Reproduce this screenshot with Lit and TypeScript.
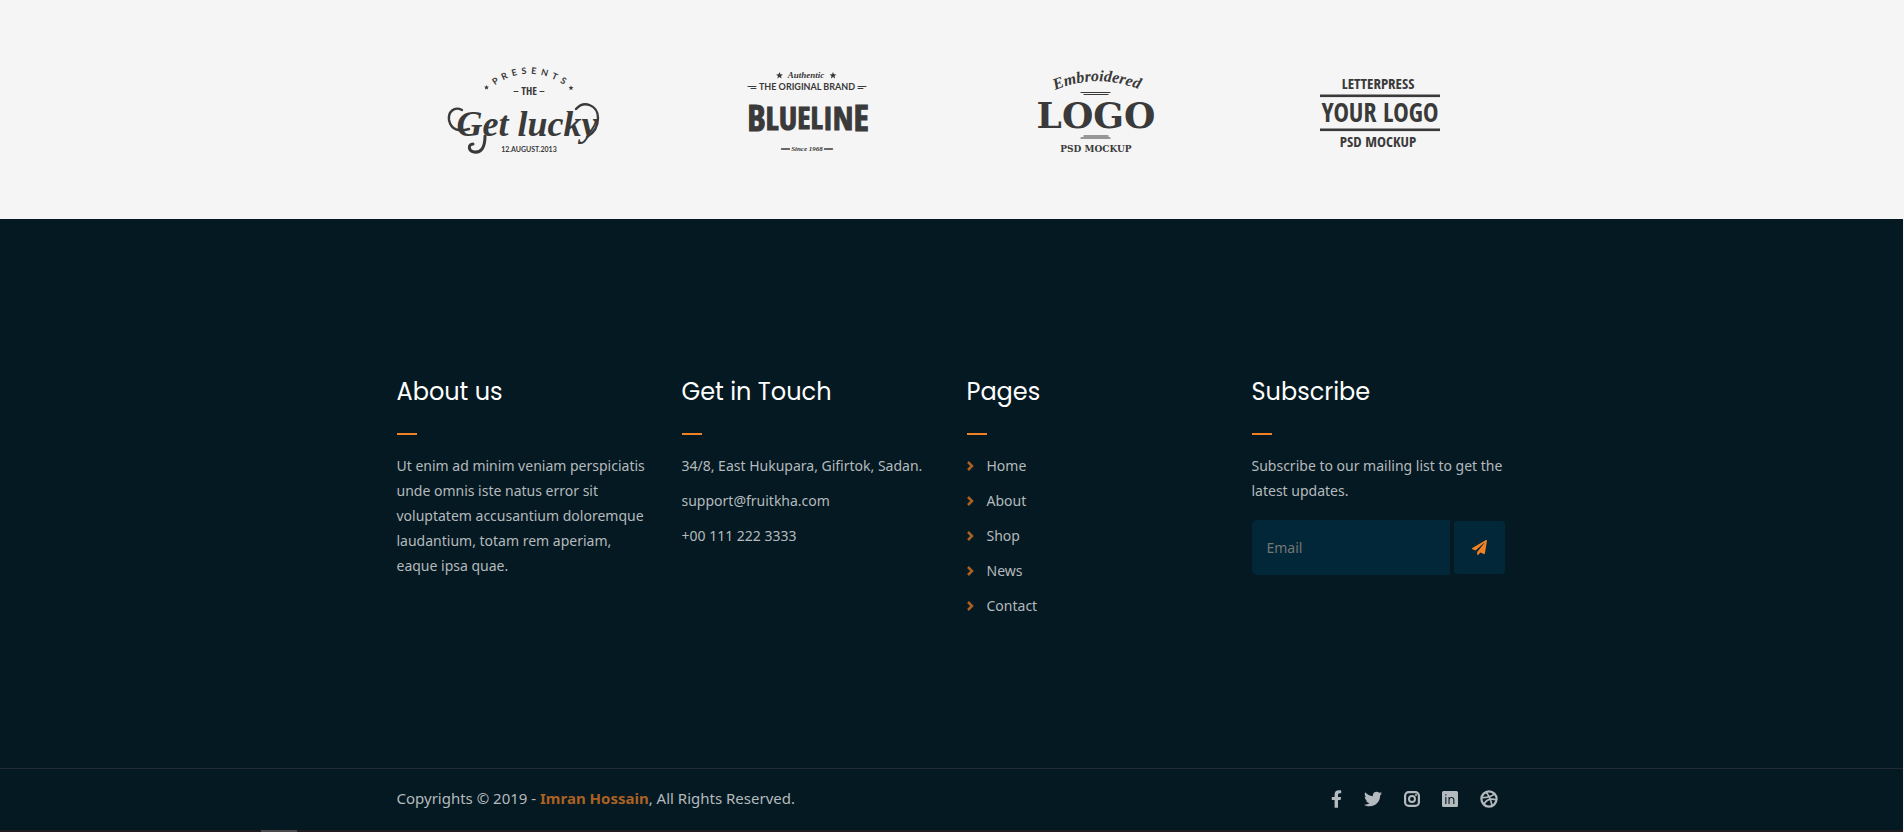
import { LitElement, html, css, svg } from "lit";
import { customElement } from "lit/decorators.js";

const star = (x: number, y: number, r: number) => {
  const pts: string[] = [];
  for (let i = 0; i < 10; i++) {
    const a = (Math.PI / 5) * i - Math.PI / 2;
    const k = i % 2 ? r * 0.45 : r;
    pts.push(`${(x + k * Math.cos(a)).toFixed(2)},${(y + k * Math.sin(a)).toFixed(2)}`);
  }
  return svg`<polygon points=${pts.join(" ")} />`;
};

@customElement("brand-row")
export class BrandRow extends LitElement {
  static styles = css`
    :host {
      display: block;
      background: #f5f5f5;
      padding: 50px 0;
    }
    .row {
      max-width: 1140px;
      margin: 0 auto;
      display: grid;
      grid-template-columns: repeat(4, 1fr);
      justify-items: center;
    }
    svg {
      display: block;
      width: 170px;
      height: 119px;
      fill: #3a3a3a;
    }
    .line {
      fill: none;
      stroke: #3a3a3a;
      stroke-linecap: round;
    }
    .guide {
      fill: none;
    }
    text {
      text-anchor: middle;
    }
    .narrow {
      font-family: "Open Sans Condensed", "Liberation Sans Narrow", "DejaVu Sans Condensed", sans-serif;
    }
    .sans {
      font-family: Lato, sans-serif;
    }
    .script {
      font-family: "Liberation Serif", serif;
      font-style: italic;
      font-weight: 700;
    }
    .slab {
      font-family: "DejaVu Serif", serif;
      font-weight: 700;
    }
    .bold {
      font-weight: 700;
    }
    .s7 { font-size: 7px; }
    .s9 { font-size: 9px; }
    .s11 { font-size: 11px; }
    .s15 { font-size: 15px; }
    .s16 { font-size: 16px; }
    .s26 { font-size: 26px; }
    .s31 { font-size: 31px; }
    .s33 { font-size: 33px; }
    .s36 { font-size: 36px; }
    .block {
      stroke: #3a3a3a;
      stroke-width: 1;
      dominant-baseline: central;
    }
  `;

  render() {
    return html`
      <div class="row">
        <svg viewBox="0 0 170 119" role="img" aria-label="Get lucky">
          <path id="arc1" class="guide" d="M51 39 Q88 9 130 38" />
          <text class="sans bold s9"><textPath href="#arc1" startOffset="50%">P&#160; R&#160; E&#160; S&#160; E&#160; N&#160; T&#160; S</textPath></text>
          ${star(47.5, 37.5, 2.6)} ${star(132, 38, 2.6)}
          <text class="narrow bold s11" x="90" y="45">THE</text>
          <path class="line" stroke-width="1" d="M75 41.5h4M101 41.5h4" />
          <text class="script s36" x="88" y="86">Get lucky</text>
          <path class="line" stroke-width="2.4" d="M23 60C15 56 9 62 10 70C12 80 20 82 30 79" />
          <path class="line" stroke-width="3" d="M46 86C46 98 42 103 35 102C29 101 29 94 34 94" />
          <path class="line" stroke-width="2.4" d="M137 59C145 50 159 55 159 68C159 77 155 83 148 87" />
          <text class="sans bold s7" x="90" y="102">12.AUGUST.2013</text>
        </svg>

        <svg viewBox="0 0 170 119" role="img" aria-label="Blueline">
          ${star(55.5, 25.5, 3.6)} ${star(109, 25.5, 3.6)}
          <text class="script s9" x="82" y="28">Authentic</text>
          <text class="sans bold s9" x="83" y="40">THE ORIGINAL BRAND</text>
          <path class="line" stroke-width="1" d="M24 36.5h8M27 38.5h5M134 36.5h8M134 38.5h5" />
          <text class="narrow bold block" x="84" y="67"><tspan class="s36">B</tspan><tspan class="s33">LU</tspan><tspan class="s31">EL</tspan><tspan class="s33">IN</tspan><tspan class="s36">E</tspan></text>
          <text class="script s7" x="83" y="101">Since 1968</text>
          <path class="line" stroke-width="1.4" d="M57.5 99h8M100.5 99h8" />
        </svg>

        <svg viewBox="0 0 170 119" role="img" aria-label="Embroidered logo">
          <path id="arc3" class="guide" d="M42 42 Q87 21 134 41" />
          <text class="script s16"><textPath href="#arc3" startOffset="50%">Embroidered</textPath></text>
          <path class="line" stroke-width="1.2" d="M72 42.5h29M75 44.5h24" />
          <text class="slab s36" x="87" y="78">LOGO</text>
          <path class="line" stroke-width="1.2" d="M75 86h24M72 88h29" />
          <text class="slab s9" x="87" y="102">PSD MOCKUP</text>
        </svg>

        <svg viewBox="0 0 170 119" role="img" aria-label="Your logo">
          <text class="narrow s15" x="84" y="39">LETTERPRESS</text>
          <rect x="26" y="44.5" width="120" height="2.6" />
          <text class="narrow bold s26" x="86" y="72">YOUR LOGO</text>
          <rect x="26" y="78.5" width="120" height="2.6" />
          <text class="narrow s15" x="84" y="97">PSD MOCKUP</text>
        </svg>
      </div>
    `;
  }
}

const social = [
  {
    name: "Facebook",
    art: svg`<svg viewBox="0 0 320 512" width="11" height="18"><path d="M279.14 288l14.22-92.66h-88.91v-60.13c0-25.35 12.42-50.06 52.24-50.06h40.42V6.26S260.43 0 225.36 0c-73.22 0-121.08 44.38-121.08 124.72v70.62H22.89V288h81.39v224h100.17V288z"/></svg>`,
  },
  {
    name: "Twitter",
    art: svg`<svg viewBox="0 0 512 512" width="18" height="18"><path d="M459.37 151.716c.325 4.548.325 9.097.325 13.645 0 138.72-105.583 298.558-298.558 298.558-59.452 0-114.68-17.219-161.137-47.106 8.447.974 16.568 1.299 25.34 1.299 49.055 0 94.213-16.568 130.274-44.832-46.132-.975-84.792-31.188-98.112-72.772 6.498.974 12.995 1.624 19.818 1.624 9.421 0 18.843-1.3 27.614-3.573-48.081-9.747-84.143-51.98-84.143-102.985v-1.299c13.969 7.797 30.214 12.67 47.431 13.319-28.264-18.843-46.781-51.005-46.781-87.391 0-19.492 5.197-37.36 14.294-52.954 51.655 63.675 129.3 105.258 216.365 109.807-1.624-7.797-2.599-15.918-2.599-24.04 0-57.828 46.782-104.934 104.934-104.934 30.213 0 57.502 12.67 76.67 33.137 23.715-4.548 46.456-13.32 66.599-25.34-7.798 24.366-24.366 44.833-46.132 57.827 21.117-2.273 41.584-8.122 60.426-16.243-14.292 20.791-32.161 39.308-52.628 54.253z"/></svg>`,
  },
  {
    name: "Instagram",
    art: svg`<svg viewBox="0 0 16 16" width="16" height="16"><rect x="1.1" y="1.1" width="13.8" height="13.8" rx="3.6" fill="none" stroke="currentColor" stroke-width="2.2"/><circle cx="8" cy="8" r="3" fill="none" stroke="currentColor" stroke-width="2"/><circle cx="12" cy="4" r="1.1"/></svg>`,
  },
  {
    name: "LinkedIn",
    art: svg`<svg viewBox="0 0 16 16" width="16" height="16"><path fill-rule="evenodd" d="M1.500 0h13A1.500 1.500 0 0 1 16 1.500v13a1.500 1.500 0 0 1-1.500 1.500h-13A1.500 1.500 0 0 1 0 14.500v-13A1.500 1.500 0 0 1 1.500 0zM3.300 3.200v1.300h1.100V3.200zM3.300 6v7h1.100V6zM6.500 6v7h1.100V9c0-2.400 3.700-2.600 3.700 0v4h1.100V8.800c0-3.200-3.700-3.600-4.800-1.700V6z"/></svg>`,
  },
  {
    name: "Dribbble",
    art: svg`<svg viewBox="0 0 18 18" width="18" height="18"><g fill="none" stroke="currentColor" stroke-width="1.7"><circle cx="9" cy="9" r="7.6" stroke-width="2.2"/><path d="M6 2C9 5.500 11 10 12 15.500M1.800 7.500C7 7.800 12 6.500 14.500 3.500M4 14.500C6 9.500 11 8.500 16.500 9.800"/></g></svg>`,
  },
];

@customElement("site-footer")
export class SiteFooter extends LitElement {
  static styles = css`
    :host {
      display: block;
      background: #051922;
      color: #b4babd;
      font: 14px/25px "Noto Sans", "Open Sans", sans-serif;
    }
    .wrap {
      max-width: 1140px;
      margin: 0 auto;
      padding: 0 15px;
      box-sizing: border-box;
    }
    .cols {
      display: grid;
      grid-template-columns: repeat(4, minmax(0, 1fr));
      column-gap: 30px;
      padding-top: 150px;
      padding-bottom: 150px;
    }
    h2 {
      margin: 0 0 18px;
      padding: 3px 0 23px;
      color: #fff;
      font: 400 24px/40px Poppins, Inter, sans-serif;
      background: linear-gradient(#f28123, #f28123) left bottom / 20px 2px no-repeat;
    }
    p,
    ul {
      margin: 0;
      padding: 0;
    }
    ul {
      list-style: none;
      display: grid;
      row-gap: 10px;
      white-space: nowrap;
    }
    a {
      color: inherit;
      text-decoration: none;
    }
    .page {
      display: flex;
      align-items: center;
      gap: 13px;
    }
    .page svg {
      fill: none;
      stroke: #ab6123;
      stroke-width: 2.5;
    }
    form {
      display: flex;
      align-items: center;
      gap: 4px;
      margin-top: 17px;
      padding-right: 2px;
    }
    input {
      flex: 1;
      min-width: 0;
      height: 55px;
      box-sizing: border-box;
      padding: 0 15px;
      border: 0;
      border-radius: 5px 0 0 5px;
      background: #012738;
      color: #fff;
      font: inherit;
    }
    input::placeholder {
      color: #757575;
    }
    button {
      width: 51px;
      height: 53px;
      padding: 0;
      border: 0;
      border-radius: 3px;
      background: #012738;
      color: #f28123;
      display: grid;
      place-items: center;
    }
    button svg,
    .social svg {
      display: block;
      fill: currentColor;
    }
    .legal {
      border-top: 1px solid #232b35;
      font-size: 15px;
    }
    .bar {
      display: flex;
      align-items: center;
      justify-content: space-between;
      padding-top: 17px;
      padding-bottom: 19px;
    }
    .author {
      color: #ab6123;
      font-weight: 700;
    }
    .social {
      display: flex;
      align-items: center;
      gap: 22px;
      padding-right: 9px;
    }
    .shelf {
      height: 2px;
      background: #1f1d20;
    }
    .tab {
      width: 36px;
      height: 2px;
      margin-left: 261px;
      background: #4b4b4c;
    }
  `;

  render() {
    return html`
      <div class="wrap cols">
        <section>
          <h2>About us</h2>
          <p>Ut enim ad minim veniam perspiciatis unde omnis iste natus error sit voluptatem accusantium doloremque laudantium, totam rem aperiam, eaque ipsa quae.</p>
        </section>
        <section>
          <h2>Get in Touch</h2>
          <ul>
            <li>34/8, East Hukupara, Gifirtok, Sadan.</li>
            <li>support@fruitkha.com</li>
            <li>+00 111 222 3333</li>
          </ul>
        </section>
        <section>
          <h2>Pages</h2>
          <ul>
            ${["Home", "About", "Shop", "News", "Contact"].map(
              (t) => html`<li><a class="page" href="#"><svg width="7" height="10" viewBox="0 0 7 10"><path d="M1 1l4 4-4 4" /></svg>${t}</a></li>`
            )}
          </ul>
        </section>
        <section>
          <h2>Subscribe</h2>
          <p>Subscribe to our mailing list to get the latest updates.</p>
          <form>
            <input type="email" placeholder="Email" aria-label="Email" />
            <button type="button" aria-label="Send">
              <svg viewBox="0 0 512 512" width="15" height="15"><path d="M476 3.200L12.500 270.600c-18.100 10.400-15.800 35.600 2.200 43.200L121 358.400l287.300-253.200c5.500-4.900 13.300 2.600 8.600 8.300L176 407v80.500c0 23.600 28.500 32.900 42.500 15.800L282 426l124.600 52.200c14.200 6 30.400-2.900 33-18.200l72-432C515 7.800 493.300-6.800 476 3.200z" /></svg>
            </button>
          </form>
        </section>
      </div>
      <div class="legal">
        <div class="wrap bar">
          <p>Copyrights © 2019 - <a class="author" href="#">Imran Hossain</a>, All Rights Reserved.</p>
          <nav class="social">
            ${social.map((s) => html`<a href="#" aria-label=${s.name}>${s.art}</a>`)}
          </nav>
        </div>
      </div>
      <div class="shelf"><div class="tab"></div></div>
    `;
  }
}

@customElement("app-root")
export class AppRoot extends LitElement {
  static styles = css`
    :host {
      display: block;
      border-right: 1px solid #f5f5f5;
    }
  `;

  render() {
    return html`<brand-row></brand-row><site-footer></site-footer>`;
  }
}
